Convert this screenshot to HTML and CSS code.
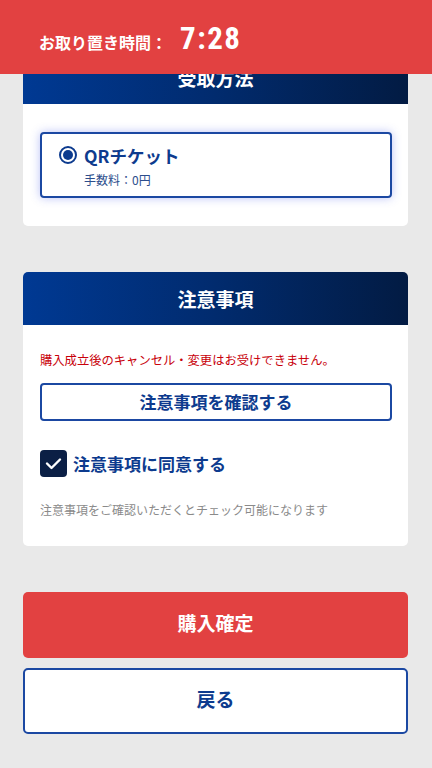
FILE: index.html
```html
<!DOCTYPE html>
<html lang="ja">
<head>
<meta charset="utf-8">
<link rel="stylesheet" href="styles.css">
</head>
<body>
<div class="timer">
  <span class="timer-label">お取り置き時間：</span><span class="timer-value">7:28</span>
</div>
<main class="page">
  <section class="card">
    <div class="card-head">受取方法</div>
    <div class="card-body card-body-method">
      <div class="method">
        <div class="method-row">
          <span class="radio"><span class="radio-dot"></span></span>
          <span class="method-name">QRチケット</span>
        </div>
        <div class="method-fee">手数料：0円</div>
      </div>
    </div>
  </section>
  <section class="card">
    <div class="card-head">注意事項</div>
    <div class="card-body card-body-notes">
      <p class="warn">購入成立後のキャンセル・変更はお受けできません。</p>
      <button class="btn-outline-sm">注意事項を確認する</button>
      <label class="agree">
        <span class="checkbox">
          <svg width="17" height="13" viewBox="0 0 17 13"><path d="M2 6.5 L6.5 11 L15 2.5" fill="none" stroke="#fff" stroke-width="2.4" stroke-linecap="round" stroke-linejoin="round"/></svg>
        </span>
        <span class="agree-text">注意事項に同意する</span>
      </label>
      <p class="note">注意事項をご確認いただくとチェック可能になります</p>
    </div>
  </section>
  <div class="actions">
    <button class="btn-primary">購入確定</button>
    <button class="btn-back">戻る</button>
  </div>
</main>
</body>
</html>
```
FILE: styles.css
```css
* { box-sizing: border-box; }
html, body { margin: 0; padding: 0; }
body {
  background: #e9e9e9;
  font-family: "Noto Sans CJK JP", "Noto Sans", sans-serif;
  color: #0d3b8e;
  width: 432px;
  height: 768px;
  overflow: hidden;
}
.timer {
  position: fixed;
  top: 0; left: 0; right: 0;
  height: 74px;
  background: #e24141;
  color: #fff;
  display: flex;
  align-items: center;
  padding-left: 39px;
  z-index: 10;
}
.timer-label {
  font-size: 16px;
  font-weight: 700;
  margin-top: 10px;
}
.timer-value {
  font-family: "Liberation Sans Narrow", "Roboto Condensed", "DejaVu Sans Condensed", "Roboto", sans-serif;
  font-stretch: condensed;
  font-weight: 700;
  font-size: 31px;
  letter-spacing: 1.5px;
  margin-left: 13px;
  line-height: 1;
  margin-top: 2px;
}
.page {
  padding: 51px 24px 0 23px;
  display: flex;
  flex-direction: column;
}
.card {
  background: #fff;
  border-radius: 5px;
  overflow: hidden;
  margin-bottom: 46px;
}
.card-head {
  height: 53px;
  background: linear-gradient(90deg, #003993 0%, #012b6e 50%, #021b43 100%);
  color: #fff;
  font-weight: 700;
  font-size: 19px;
  display: flex;
  align-items: center;
  justify-content: center;
  padding-bottom: 1px;
}
.card-body-method {
  padding: 28px 16px 28px 17px;
}
.method {
  border: 2px solid #1b48a2;
  border-radius: 4px;
  height: 66px;
  box-shadow: 0 0 10px rgba(60, 80, 230, 0.35);
  padding: 10px 0 0 17px;
}
.method-row {
  display: flex;
  align-items: center;
  height: 22px;
}
.radio {
  width: 18px; height: 18px;
  border: 2px solid #0d3b8e;
  border-radius: 50%;
  display: flex;
  align-items: center;
  justify-content: center;
}
.radio-dot {
  width: 10px; height: 10px;
  border-radius: 50%;
  background: #0d3b8e;
}
.method-name {
  margin-left: 7px;
  font-weight: 700;
  font-size: 17.5px;
}
.method-fee {
  margin: 5px 0 0 25px;
  font-size: 12px;
  color: #2c4d8c;
}
.card-body-notes {
  padding: 26px 16px 27px 17px;
}
.warn {
  margin: 0;
  font-size: 12.3px;
  color: #c8000a;
  line-height: 18px;
}
.btn-outline-sm {
  display: block;
  width: 100%;
  margin-top: 14px;
  height: 38px;
  background: #fff;
  border: 2px solid #1b48a2;
  border-radius: 4px;
  font-family: inherit;
  font-weight: 700;
  font-size: 17px;
  color: #0d3b8e;
  padding: 0 0 2px;
}
.agree {
  display: flex;
  align-items: center;
  margin-top: 29px;
}
.checkbox {
  width: 27px; height: 27px;
  border-radius: 4px;
  background: #0b1f45;
  display: flex;
  align-items: center;
  justify-content: center;
}
.agree-text {
  margin-left: 6px;
  font-weight: 700;
  font-size: 17px;
  color: #0d3b8e;
}
.note {
  margin: 24px 0 0;
  font-size: 12px;
  line-height: 18px;
  color: #8a8a8a;
}
.actions {
  display: flex;
  flex-direction: column;
  gap: 10px;
}
.btn-primary, .btn-back {
  display: block;
  width: 100%;
  height: 66px;
  border-radius: 5px;
  font-family: inherit;
  font-weight: 700;
  font-size: 19px;
  padding: 0 0 5px;
}
.btn-primary {
  background: #e24141;
  color: #fff;
  border: none;
}
.btn-back {
  background: #fff;
  color: #0d3b8e;
  border: 2px solid #1b48a2;
}
```
